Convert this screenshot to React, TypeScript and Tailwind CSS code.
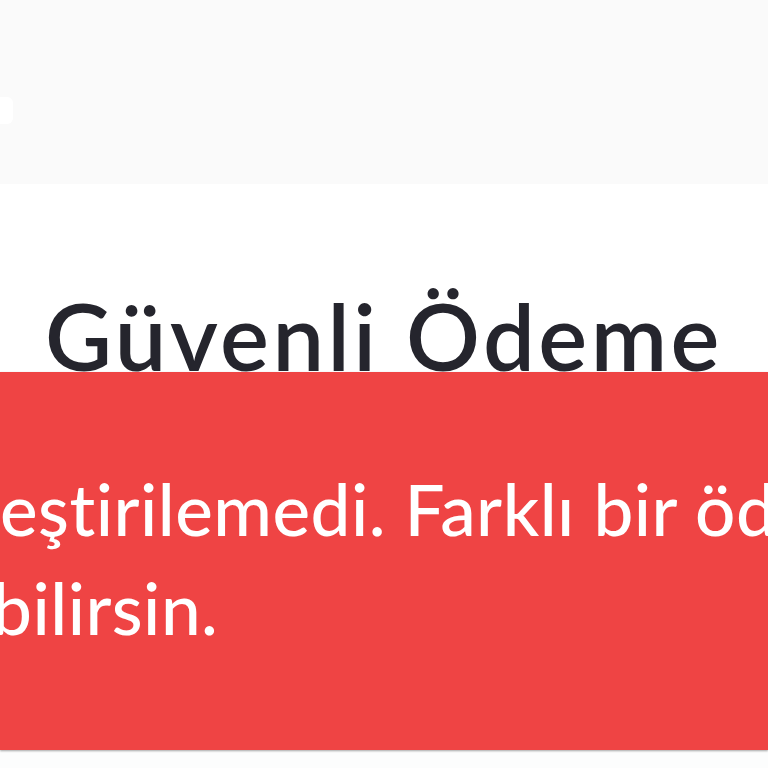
export default function App() {
  return (
    <div className="relative h-[768px] w-[768px] overflow-hidden bg-[#fcfdfd]" style={{ fontFamily: 'Lato, "Noto Sans", sans-serif' }}>
      {/* header bar */}
      <header className="h-[184px] bg-[#fafafa] pt-[97px]">
        <div className="h-[27px] w-[13px] rounded-r-md bg-white" />
      </header>

      <main className="bg-white">
        <h1 className="pt-[106px] text-center text-[92px] font-semibold leading-none tracking-[3.5px] text-[#25252d]">Güvenli Ödeme</h1>
      </main>

      {/* error toast */}
      <div className="absolute left-0 right-0 top-[372px] h-[378px] bg-[#ef4444] pt-[87px] text-[71px] font-medium leading-[99px] tracking-[0.5px] text-white shadow-[0_1px_2px_rgba(0,0,0,0.35)]">
        <div className="whitespace-nowrap">
          <span className="inline-flex w-0 justify-end overflow-visible">Ödemen gerçekl</span>
          <span>eştirilemedi. Farklı bir ödeme</span>
        </div>
        <div className="-ml-[8px] whitespace-nowrap">
          <span className="inline-flex w-0 justify-end overflow-visible">yöntemiyle tekrar deneye</span>
          <span>bilirsin.</span>
        </div>
      </div>
    </div>
  );
}
